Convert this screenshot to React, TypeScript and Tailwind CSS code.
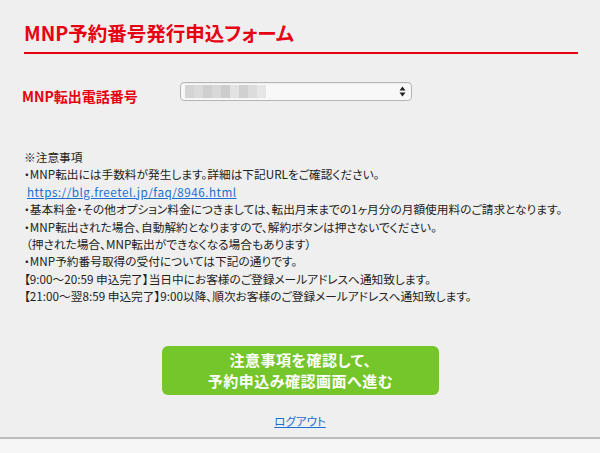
import React from "react";

const font = {
  fontFamily: '"Noto Sans CJK JP", "Noto Sans", sans-serif',
  fontFeatureSettings: '"palt"',
};

const blur = ["#d4d4d4", "#dadada", "#cfcfcf", "#d8d8d8", "#cccccc", "#e2e2e2", "#d0d0d0", "#dcdcdc", "#e6e6e6"];

const notes: React.ReactNode[] = [
  "※注意事項",
  "・MNP転出には手数料が発生します。詳細は下記URLをご確認ください。",
  <a key="l" href="#" className="ml-[3px] text-[#1a6fd0] underline tracking-[0.5px]">https://blg.freetel.jp/faq/8946.html</a>,
  "・基本料金・その他オプション料金につきましては、転出月末までの1ヶ月分の月額使用料のご請求となります。",
  "・MNP転出された場合、自動解約となりますので、解約ボタンは押さないでください。",
  <span key="p" className="ml-[2px]">（押された場合、MNP転出ができなくなる場合もあります）</span>,
  "・MNP予約番号取得の受付については下記の通りです。",
  "【9:00〜20:59 申込完了】当日中にお客様のご登録メールアドレスへ通知致します。",
  "【21:00〜翌8:59 申込完了】9:00以降、順次お客様のご登録メールアドレスへ通知致します。",
];

export default function App() {
  return (
    <div className="w-[600px] h-[453px] bg-[#efefef] flex flex-col overflow-hidden" style={font}>
      <div className="px-[24px] pt-[20px]">
        <h1 className="text-[19.5px] font-bold text-[#e60012] leading-[26px]">MNP予約番号発行申込フォーム</h1>
        <div className="mt-[6px] w-[554px] h-[2px] bg-[#e60012]" />
      </div>

      {/* phone number row */}
      <div className="flex items-start mt-[28px] pl-[22px]">
        <span className="w-[158px] mt-[4px] text-[14px] leading-[20px] font-bold text-[#e60012]">MNP転出電話番号</span>
        <div className="w-[232px] h-[19px] rounded-[4px] border border-[#b5b5b5] bg-[#f8f8f8] flex items-center justify-between pl-[4px] pr-[5px] shadow-[inset_0_1px_1px_rgba(0,0,0,0.05)]">
          <div className="flex h-[13px]">
            {blur.map((c, i) => (
              <div key={i} className="w-[9px] h-full" style={{ background: c }} />
            ))}
          </div>
          <svg width="7" height="11" viewBox="0 0 7 11">
            <path d="M3.5 0.5 L6.5 4.5 L0.5 4.5 Z" fill="#222" />
            <path d="M3.5 10.5 L6.5 6.5 L0.5 6.5 Z" fill="#222" />
          </svg>
        </div>
      </div>

      <div className="mt-[42px] pl-[24px] text-[11.7px] leading-[17.4px] text-[#222]">
        {notes.map((n, i) => (
          <div key={i}>{n}</div>
        ))}
      </div>

      <div className="flex justify-center mt-[41px]">
        <button className="w-[277px] h-[49px] ml-[1px] rounded-[6px] bg-[#75c62a] text-white text-[15px] font-bold leading-[21px] tracking-[0.5px]">
          注意事項を確認して、<br />予約申込み確認画面へ進む
        </button>
      </div>

      <div className="flex justify-center mt-[18px]">
        <a href="#" className="text-[11.5px] text-[#1a6fd0] underline">ログアウト</a>
      </div>

      <div className="mt-auto h-[16px] border-t-2 border-[#bdbdbd] bg-[#f6f6f6]" />
    </div>
  );
}
